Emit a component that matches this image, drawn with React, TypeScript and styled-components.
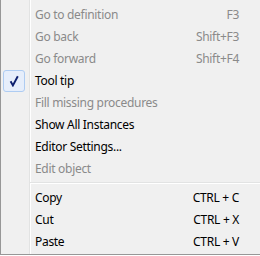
import styled, { createGlobalStyle } from 'styled-components'

const GlobalStyle = createGlobalStyle`
    html, body {
        margin: 0;
        padding: 0;
        background: #ffffff;
    }
    body {
        font-family: "Noto Sans", "Liberation Sans", sans-serif;
        font-size: 12px;
        letter-spacing: -0.3px;
    }
`

interface IMenuItem {
    label: string
    shortcut?: string
    disabled?: boolean
    checked?: boolean
}

const topItems: IMenuItem[] = [
    { label: 'Go to definition', shortcut: 'F3', disabled: true },
    { label: 'Go back', shortcut: 'Shift+F3', disabled: true },
    { label: 'Go forward', shortcut: 'Shift+F4', disabled: true },
    { label: 'Tool tip', checked: true },
    { label: 'Fill missing procedures', disabled: true },
    { label: 'Show All Instances' },
    { label: 'Editor Settings...' },
    { label: 'Edit object', disabled: true },
]

const clipboardItems: IMenuItem[] = [
    { label: 'Copy', shortcut: 'CTRL + C' },
    { label: 'Cut', shortcut: 'CTRL + X' },
    { label: 'Paste', shortcut: 'CTRL + V' },
]

function CheckMark() {
    return (
        <svg width="10" height="12" viewBox="0 0 10 12">
            <path d="M1.6 6.2 L3.9 10.4 L8.8 1.2" fill="none" stroke="#0c1f6e" strokeWidth="1.9" strokeLinejoin="miter" />
        </svg>
    )
}

function Item({ label, shortcut, disabled, checked }: IMenuItem) {
    return (
        <Row disabled={ disabled }>
            <Gutter>
                { checked && <CheckBox><CheckMark /></CheckBox> }
            </Gutter>
            <Label>{ label }</Label>
            <Shortcut>{ shortcut }</Shortcut>
        </Row>
    )
}

export default function App() {
    return (
        <>
            <GlobalStyle />
            <Menu>
                { topItems.map( item => <Item key={ item.label } { ...item } /> ) }
                <Separator />
                { clipboardItems.map( item => <Item key={ item.label } { ...item } /> ) }
            </Menu>
        </>
    )
}

const Menu = styled.div`
    width: 259px;
    padding: 3px 0 2px;
    border-left: 1px solid #979797;
    border-bottom: 1px solid #979797;
    background: linear-gradient( to right,
        #f0f0f0 0, #f0f0f0 28px,
        #e2e3e3 28px, #e2e3e3 29px,
        #ffffff 29px, #ffffff 30px,
        #f0f0f0 30px );
`

const Row = styled.div<{ disabled?: boolean }>`
    display: grid;
    grid-template-columns: 28px 1fr auto;
    align-items: center;
    height: 22px;
    padding-right: 21px;
    color: ${ props => props.disabled ? '#8a8a8a' : '#000000' };
    line-height: 22px;
    white-space: nowrap;
`

const Gutter = styled.div`
    display: flex;
    align-items: center;
    height: 22px;
    padding-left: 2px;
`

const CheckBox = styled.div`
    display: flex;
    align-items: center;
    justify-content: center;
    box-sizing: border-box;
    width: 22px;
    height: 22px;
    border: 1px solid #aeccf2;
    border-radius: 3px;
    background: #e6eefb;
`

const Label = styled.span`
    padding-left: 6px;
    padding-top: 1px;
`

const Shortcut = styled.span`
    text-align: right;
    padding-top: 1px;
`

const Separator = styled.div`
    height: 7px;
    margin-left: 29px;
    background: linear-gradient( to bottom,
        transparent 0, transparent 3px,
        #e2e3e3 3px, #e2e3e3 4px,
        #ffffff 4px, #ffffff 5px,
        transparent 5px );
`
